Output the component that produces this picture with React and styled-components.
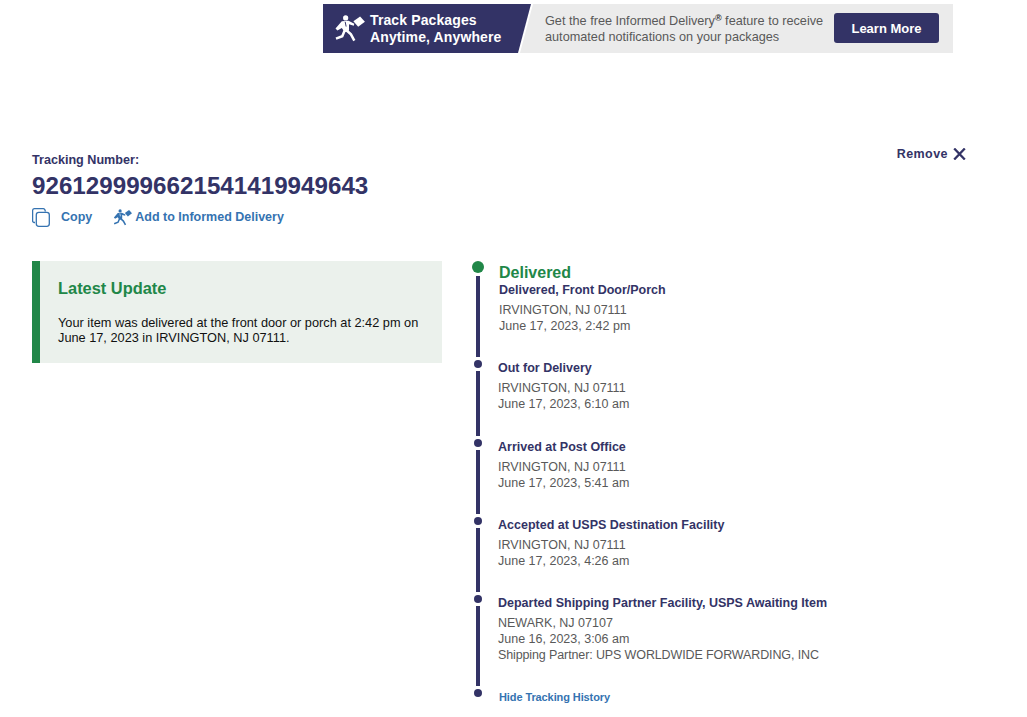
import React from 'react';
import styled, { createGlobalStyle } from 'styled-components';

const GlobalStyle = createGlobalStyle`
  html, body {
    margin: 0;
    padding: 0;
    background: #fff;
    font-family: "Liberation Sans", Arial, sans-serif;
  }
`;

const navy = '#333366';
const blue = '#3573b1';
const green = '#218748';

const Page = styled.div`
  width: 1027px;
  height: 717px;
  overflow: hidden;
  padding-top: 4px;
  box-sizing: border-box;
`;

const Banner = styled.div`
  display: flex;
  width: 630px;
  height: 49px;
  margin-left: 323px;
  background: #ebebeb;
`;

const BannerEdge = styled.div`
  width: 210px;
  flex-shrink: 0;
  background: #fff;
  clip-path: polygon(0 0, 100% 0, 197px 100%, 0 100%);
`;

const BannerLead = styled.div`
  display: flex;
  align-items: center;
  height: 100%;
  padding-left: 11px;
  box-sizing: border-box;
  background: ${navy};
  clip-path: polygon(0 0, 208px 0, 195px 100%, 0 100%);
`;

const BannerLeadText = styled.div`
  margin-left: 5px;
  color: #fff;
  font-size: 14px;
  font-weight: 700;
  line-height: 17px;
  letter-spacing: 0.12px;
`;

const BannerCopy = styled.div`
  flex: 1;
  padding-left: 12px;
  color: #595959;
  font-size: 12.7px;
  line-height: 16px;
  align-self: center;

  sup {
    color: #333;
    font-size: 9px;
    font-weight: 700;
    line-height: 0;
    vertical-align: 4px;
  }
`;

const LearnMore = styled.button`
  align-self: flex-start;
  width: 105px;
  height: 30px;
  margin: 9px 14px 0 0;
  padding: 0;
  border: 0;
  border-radius: 3px;
  background: ${navy};
  color: #fff;
  font-family: inherit;
  font-size: 13px;
  font-weight: 700;
`;

const TrackingHead = styled.section`
  display: flex;
  justify-content: space-between;
  align-items: flex-start;
  margin-top: 91px;
  padding: 0 61px 0 32px;
`;

const Label = styled.div`
  color: ${navy};
  font-size: 12.6px;
  font-weight: 700;
  line-height: 16px;
  margin-top: 8px;
`;

const TrackingNumber = styled.div`
  margin-top: 5px;
  color: ${navy};
  font-size: 24.2px;
  font-weight: 700;
  line-height: 26px;
`;

const Actions = styled.div`
  display: flex;
  align-items: center;
  gap: 21px;
  margin-top: 8px;
`;

const Action = styled.a`
  display: flex;
  align-items: center;
  gap: ${(p) => p.$gap}px;
  color: ${blue};
  font-size: 12.5px;
  font-weight: 700;
  line-height: 20px;
`;

const Remove = styled.div`
  display: flex;
  align-items: center;
  gap: 5px;
  margin-top: 2px;
  color: ${navy};
  font-size: 12.5px;
  font-weight: 700;
  letter-spacing: 0.45px;
  line-height: 16px;
`;

const Columns = styled.div`
  display: flex;
  align-items: flex-start;
  margin-top: 34px;
  padding-left: 32px;
`;

const UpdateCard = styled.aside`
  width: 410px;
  height: 102px;
  padding: 18px 18px 0 18px;
  box-sizing: border-box;
  flex-shrink: 0;
  background: #ebf1ec;
  border-left: 8px solid ${green};
`;

const UpdateTitle = styled.div`
  color: ${green};
  font-size: 16.4px;
  font-weight: 700;
  line-height: 18px;
`;

const UpdateBody = styled.p`
  margin: 18px 0 0;
  color: #111;
  font-size: 12.75px;
  line-height: 15px;
`;

const Timeline = styled.div`
  margin-left: 30px;
  width: 500px;
`;

const Step = styled.div`
  display: flex;
  height: ${(p) => p.$height}px;
`;

const Rail = styled.div`
  display: flex;
  flex-direction: column;
  align-items: center;
  width: 12px;
  flex-shrink: 0;
`;

const Dot = styled.span`
  flex-shrink: 0;
  width: ${(p) => (p.$current ? 12 : 8)}px;
  height: ${(p) => (p.$current ? 12 : 8)}px;
  border-radius: 50%;
  background: ${(p) => (p.$current ? green : navy)};
`;

const Line = styled.span`
  flex: 1;
  width: 4px;
  margin: 3px 0;
  background: ${navy};
`;

const StepBody = styled.div`
  margin-left: ${(p) => p.$indent}px;
  margin-top: ${(p) => p.$top}px;
`;

const Status = styled.div`
  color: ${green};
  font-size: 16px;
  font-weight: 700;
  line-height: 18px;
`;

const StepTitle = styled.div`
  color: ${navy};
  font-size: 12.5px;
  font-weight: 700;
  line-height: 16px;
  margin-bottom: 4px;
`;

const StepLine = styled.div`
  color: #595959;
  font-size: 12.5px;
  line-height: 16px;
  letter-spacing: ${(p) => (p.$tight ? '-0.12px' : '0')};
`;

const HideLink = styled.a`
  display: block;
  color: ${blue};
  font-size: 11px;
  font-weight: 700;
  line-height: 14px;
  letter-spacing: -0.1px;
`;

const Runner = ({ width, height, color, tie }) => (
  <svg width={width} height={height} viewBox="0 0 32 28" aria-hidden="true">
    <circle cx="12" cy="3" r="2.7" fill={color} />
    <path fill={color} d="M8 6.500L15 6l6 3-.6 2.200-4.900-1.600V16l-4.500 2L8 13.500 3.500 16 1.500 14z" />
    <path fill="none" stroke={tie} strokeWidth="1" d="M11.500 7l1 5" />
    <path fill="none" stroke={color} strokeWidth="2.600" d="M11 16l-2.500 6-6.500 2.500M12.500 15.500l5 4.500 3.500 6.500" />
    <path fill={color} d="M20 6.500L27 1.500l5 5.500-7 5.200z" />
  </svg>
);

const CopyIcon = () => (
  <svg width="18" height="19" viewBox="0 0 18 19" fill="none" stroke={blue} strokeWidth="1.300" aria-hidden="true">
    <path d="M3 14.500H2a1.500 1.500 0 0 1-1.400-1.500V2.500A2 2 0 0 1 2.500.7h8.500A2 2 0 0 1 13 3.500" />
    <rect x="4.300" y="4.300" width="13" height="14" rx="2.500" />
  </svg>
);

const RemoveIcon = () => (
  <svg width="13" height="12" viewBox="0 0 13 12" fill="none" stroke={navy} strokeWidth="2.300" aria-hidden="true">
    <path d="M1.200 .5l10.600 11M11.800 .5L1.200 11.500" />
  </svg>
);

const steps = [
  { height: 99, top: 3, indent: 15, status: 'Delivered', title: 'Delivered, Front Door/Porch', lines: ['IRVINGTON, NJ 07111', 'June 17, 2023, 2:42 pm'] },
  { height: 79, top: 0, indent: 14, title: 'Out for Delivery', lines: ['IRVINGTON, NJ 07111', 'June 17, 2023, 6:10 am'] },
  { height: 78, top: 0, indent: 14, title: 'Arrived at Post Office', lines: ['IRVINGTON, NJ 07111', 'June 17, 2023, 5:41 am'] },
  { height: 78, top: 0, indent: 14, title: 'Accepted at USPS Destination Facility', lines: ['IRVINGTON, NJ 07111', 'June 17, 2023, 4:26 am'] },
  { height: 94, top: 0, indent: 14, title: 'Departed Shipping Partner Facility, USPS Awaiting Item', lines: ['NEWARK, NJ 07107', 'June 16, 2023, 3:06 am', 'Shipping Partner: UPS WORLDWIDE FORWARDING, INC'] },
];

export default function App() {
  return (
    <Page>
      <GlobalStyle />
      <Banner>
        <BannerEdge>
          <BannerLead>
            <Runner width={31} height={27} color="#fff" tie={navy} />
            <BannerLeadText>
              Track Packages
              <br />
              Anytime, Anywhere
            </BannerLeadText>
          </BannerLead>
        </BannerEdge>
        <BannerCopy>
          Get the free Informed Delivery<sup>®</sup> feature to receive
          <br />
          automated notifications on your packages
        </BannerCopy>
        <LearnMore>Learn More</LearnMore>
      </Banner>

      <TrackingHead>
        <div>
          <Label>Tracking Number:</Label>
          <TrackingNumber>9261299996621541419949643</TrackingNumber>
          <Actions>
            <Action $gap={11}>
              <CopyIcon />
              Copy
            </Action>
            <Action $gap={3}>
              <Runner width={19} height={17} color={blue} tie="#fff" />
              Add to Informed Delivery
            </Action>
          </Actions>
        </div>
        <Remove>
          Remove
          <RemoveIcon />
        </Remove>
      </TrackingHead>

      <Columns>
        <UpdateCard>
          <UpdateTitle>Latest Update</UpdateTitle>
          <UpdateBody>
            Your item was delivered at the front door or porch at 2:42 pm on
            <br />
            June 17, 2023 in IRVINGTON, NJ 07111.
          </UpdateBody>
        </UpdateCard>

        <Timeline>
          {steps.map((step) => (
            <Step key={step.title} $height={step.height}>
              <Rail>
                <Dot $current={Boolean(step.status)} />
                <Line />
              </Rail>
              <StepBody $top={step.top} $indent={step.indent}>
                {step.status && <Status>{step.status}</Status>}
                <StepTitle>{step.title}</StepTitle>
                {step.lines.map((line) => (
                  <StepLine key={line} $tight={line.startsWith('Shipping')}>{line}</StepLine>
                ))}
              </StepBody>
            </Step>
          ))}
          <Step $height={20}>
            <Rail>
              <Dot />
            </Rail>
            <StepBody $top={1} $indent={15}>
              <HideLink>Hide Tracking History</HideLink>
            </StepBody>
          </Step>
        </Timeline>
      </Columns>
    </Page>
  );
}
